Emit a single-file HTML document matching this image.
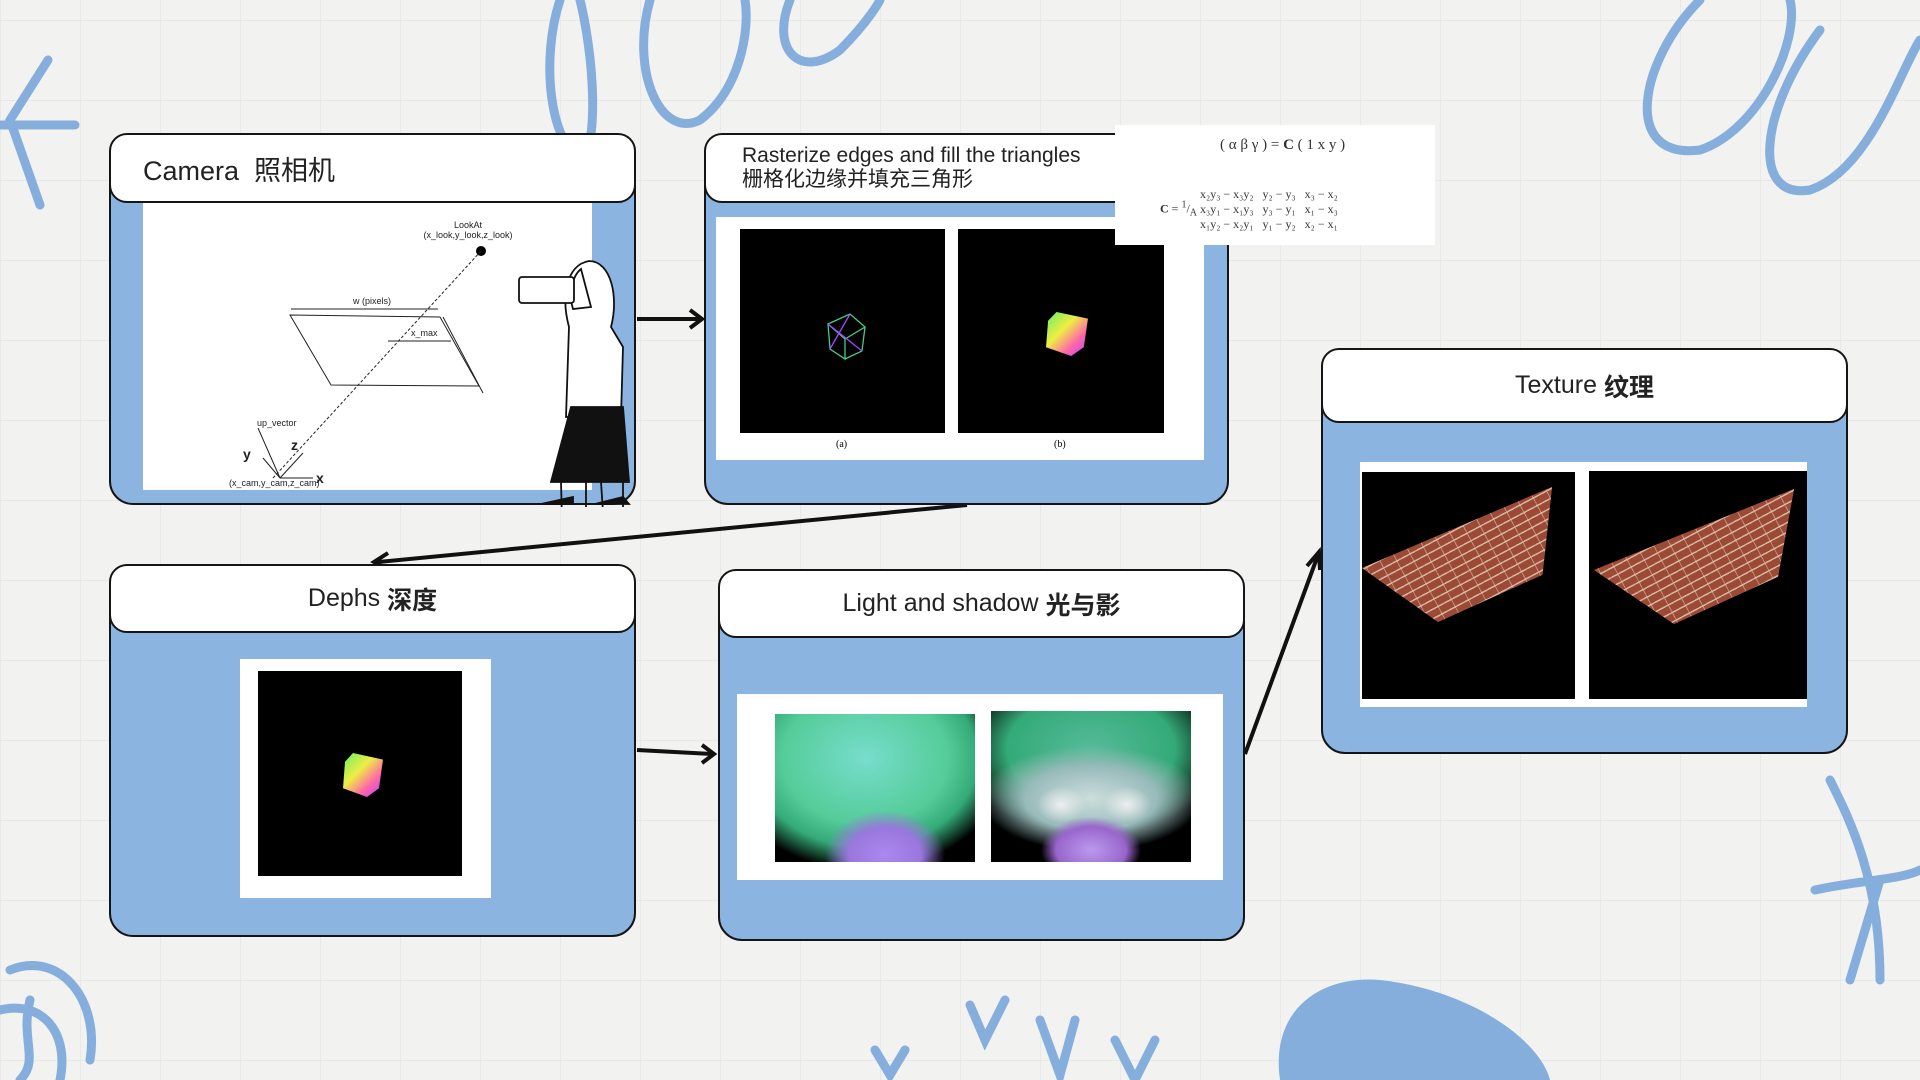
<!DOCTYPE html>
<html><head><meta charset="utf-8"><style>
*{margin:0;padding:0;box-sizing:border-box}
body{width:1920px;height:1080px;overflow:hidden;position:relative;background:#f2f2f1;font-family:"Liberation Sans","Noto Sans CJK SC",sans-serif;
background-image:linear-gradient(#e8e8e8 1px,transparent 1px),linear-gradient(90deg,#e8e8e8 1px,transparent 1px);background-size:80px 80px;background-position:0 20px}
.box{position:absolute;background:#8bb4e0;border:2px solid #151515;border-radius:24px}
.hd{position:absolute;left:-2px;right:-2px;top:-2px;background:#fff;border:2px solid #151515;border-radius:18px;display:flex;align-items:center;justify-content:center;font-size:25px;color:#222;font-weight:300}
.w{position:absolute;background:#fff}
.k{position:absolute;background:#000}
.a{position:absolute}
.br{position:absolute;background:repeating-linear-gradient(-28deg,#9b4a35 0 7px,#d9b3a0 7px 8.5px),#9b4a35}
.br::after{content:"";position:absolute;inset:0;background:repeating-linear-gradient(62deg,transparent 0 14px,rgba(220,190,170,.6) 14px 15px)}
</style></head><body>
<svg class="a" style="left:0;top:0" width="1920" height="1080">
<g fill="none" stroke="#86aedc" stroke-width="9" stroke-linecap="round">
<path d="M48 60 L10 120 L40 205 M0 125 L75 125"/>
<path d="M560 0 C540 60 550 150 585 160 C600 120 590 40 580 0"/>
<path d="M650 0 C630 70 660 140 700 120 C740 90 750 30 745 0"/>
<path d="M790 0 C770 50 800 80 840 50 C870 20 880 0 880 0"/>
<path d="M1700 0 C1640 60 1620 160 1700 150 C1760 130 1800 40 1790 0"/>
<path d="M1820 30 C1760 110 1750 200 1810 190 C1870 170 1900 70 1920 40"/>
<path d="M1830 780 C1850 820 1880 880 1880 980 M1815 890 C1860 880 1900 880 1920 870 M1880 880 L1850 980"/>
<path d="M10 970 C60 950 100 1000 90 1060 M0 1010 C40 1000 70 1030 60 1080 M30 1000 C20 1040 40 1060 20 1080"/>
<path d="M875 1050 L890 1075 L905 1050 M970 1005 L985 1040 L1005 1000 M1040 1020 L1060 1075 L1075 1020 M1115 1040 L1135 1080 L1155 1040"/>
</g>
<path d="M1280 1080 C1270 1010 1320 975 1380 980 C1470 990 1540 1040 1550 1080Z" fill="#86aedc"/>
<g stroke="#111" stroke-width="4" fill="none">
<path d="M637 319 L700 319"/><path d="M690 310 L702 319 L690 328"/>
<path d="M967 505 L378 562"/><path d="M388 553 L374 562 L389 570"/>
<path d="M637 750 L712 754"/><path d="M702 745 L714 754 L702 763"/>
<path d="M1245 754 L1318 555"/><path d="M1307 566 L1319 552 L1320 570"/>
</g>
</svg>

<div class="box" style="left:109px;top:133px;width:527px;height:372px">
<div class="hd" style="height:70px;justify-content:flex-start;padding-left:32px;font-size:27px;font-weight:400">Camera&nbsp;&nbsp;照相机</div>
<div class="w" style="left:32px;top:68px;width:449px;height:287px">
<svg width="449" height="287" font-family="Liberation Sans" font-size="9" fill="#222">
<text x="325" y="25" text-anchor="middle">LookAt</text><text x="325" y="35" text-anchor="middle">(x_look,y_look,z_look)</text>
<circle cx="338" cy="48" r="5" fill="#000"/>
<g stroke="#222" fill="none" stroke-width="1">
<path d="M338 48 L130 275" stroke-dasharray="3 2"/>
<path d="M147 112 L297 114 L336 183 L188 182Z"/>
<path d="M148 106 L295 106"/><path d="M245 138 L308 138"/><path d="M300 114 L340 190"/>
<path d="M137 275 L115 225"/><path d="M137 275 L120 255"/><path d="M137 275 L170 275"/><path d="M137 275 L160 250"/>
</g>
<text x="210" y="101">w (pixels)</text><text x="268" y="133">x_max</text><text x="114" y="223">up_vector</text>
<text x="100" y="256" font-size="14" font-weight="bold">y</text><text x="148" y="247" font-size="14" font-weight="bold">z</text><text x="173" y="280" font-size="14" font-weight="bold">x</text>
<text x="86" y="283">(x_cam,y_cam,z_cam)</text>
</svg></div>
<svg class="a" style="left:400px;top:122px" width="130" height="250">
<g stroke="#111" stroke-width="1.8" fill="#fff">
<path d="M78 4 C100 4 108 40 100 70 L112 90 L110 160 L55 160 L58 70 C50 40 55 8 78 4Z"/>
<path d="M70 12 C60 20 58 40 62 52 L80 50Z" fill="#fff"/>
<rect x="8" y="20" width="55" height="26" rx="3"/>
<path d="M60 150 L112 150 L118 225 L40 225Z" fill="#111"/>
<path d="M50 225 L52 300 M75 225 L75 300 M90 225 L95 300 M112 225 L112 300"/>
<path d="M30 247 L62 247 L62 240 Z M84 247 L118 247 L112 240Z" fill="#111"/>
</g></svg>
</div>

<div class="box" style="left:704px;top:133px;width:525px;height:372px">
<div class="hd" style="height:70px;flex-direction:column;align-items:flex-start;padding-left:36px;font-size:21px;font-weight:400;line-height:24px">Rasterize edges and fill the triangles<span>栅格化边缘并填充三角形</span></div>
<div class="w" style="left:10px;top:82px;width:488px;height:243px">
<div class="k" style="left:24px;top:12px;width:205px;height:204px"><svg width="205" height="204"><g stroke-width="1.3" fill="none"><path d="M88 95 L110 85 L125 98 L105 110Z M88 95 L90 120 L105 130 L105 110 M125 98 L122 122 L105 130" stroke="#4c8"/><path d="M90 120 L110 85 M88 95 L122 122" stroke="#a4f"/></g></svg></div>
<div class="k" style="left:242px;top:12px;width:206px;height:204px"><div class="a" style="left:88px;top:83px;width:42px;height:44px;background:linear-gradient(135deg,#6e6,#ee4 40%,#f6a 70%,#a4f);clip-path:polygon(25% 0,100% 15%,90% 80%,60% 100%,0 80%,5% 20%)"></div></div>
<div class="a" style="left:120px;top:222px;font:10px 'Liberation Serif'">(a)</div><div class="a" style="left:338px;top:222px;font:10px 'Liberation Serif'">(b)</div>
</div></div>
<div class="w" style="left:1115px;top:125px;width:320px;height:120px;font-family:'Liberation Serif',serif;color:#333">
<div class="a" style="left:105px;top:12px;font-size:15px">( α β γ ) = <b>C</b> ( 1 x y )</div>
<div class="a" style="left:45px;top:62px;font-size:12px;line-height:15px"><b>C</b> = <sup>1</sup>/<sub>A</sub> <span style="display:inline-block;vertical-align:middle">x₂y₃ − x₃y₂ &nbsp; y₂ − y₃ &nbsp; x₃ − x₂<br>x₃y₁ − x₁y₃ &nbsp; y₃ − y₁ &nbsp; x₁ − x₃<br>x₁y₂ − x₂y₁ &nbsp; y₁ − y₂ &nbsp; x₂ − x₁</span></div>
</div>

<div class="box" style="left:1321px;top:348px;width:527px;height:406px">
<div class="hd" style="height:75px">Texture <b style="font-weight:700">&nbsp;纹理</b></div>
<div class="w" style="left:37px;top:112px;width:447px;height:245px">
<div class="k" style="left:2px;top:10px;width:213px;height:227px;overflow:hidden"><div class="br" style="left:0;top:15px;width:190px;height:135px;clip-path:polygon(0 60%,100% 0,95% 65%,40% 100%)"></div></div>
<div class="k" style="left:229px;top:9px;width:218px;height:228px;overflow:hidden"><div class="br" style="left:5px;top:18px;width:200px;height:135px;clip-path:polygon(0 60%,100% 0,92% 65%,40% 100%)"></div></div>
</div></div>

<div class="box" style="left:109px;top:564px;width:527px;height:373px">
<div class="hd" style="height:69px">Dephs <b style="font-weight:700">&nbsp;深度</b></div>
<div class="w" style="left:129px;top:93px;width:251px;height:239px">
<div class="k" style="left:18px;top:12px;width:204px;height:205px"><div class="a" style="left:85px;top:82px;width:40px;height:44px;background:linear-gradient(135deg,#6e6,#ee4 40%,#f6a 70%,#a4f);clip-path:polygon(25% 0,100% 15%,90% 80%,60% 100%,0 80%,5% 20%)"></div></div>
</div></div>

<div class="box" style="left:718px;top:569px;width:527px;height:372px">
<div class="hd" style="height:69px">Light and shadow <b style="font-weight:700">&nbsp;光与影</b></div>
<div class="w" style="left:17px;top:123px;width:486px;height:186px">
<div class="k" style="left:38px;top:20px;width:200px;height:148px;background:radial-gradient(ellipse 30% 30% at 55% 95%,#a8e 0,#97d 60%,transparent 100%),radial-gradient(ellipse 75% 80% at 45% 30%,#7dc 0,#5c9 55%,#3a7 75%,transparent 95%),#000"></div>
<div class="k" style="left:254px;top:17px;width:200px;height:151px;background:radial-gradient(ellipse 12% 12% at 35% 62%,#eee,transparent 100%),radial-gradient(ellipse 12% 12% at 68% 62%,#eee,transparent 100%),radial-gradient(ellipse 25% 22% at 50% 92%,#b9e,#96c 70%,transparent 100%),radial-gradient(ellipse 55% 35% at 50% 58%,#cdd,#9bb 60%,transparent 100%),radial-gradient(ellipse 70% 60% at 50% 25%,#5b9,#3a7 60%,transparent 95%),#000"></div>
</div></div>
</body></html>
